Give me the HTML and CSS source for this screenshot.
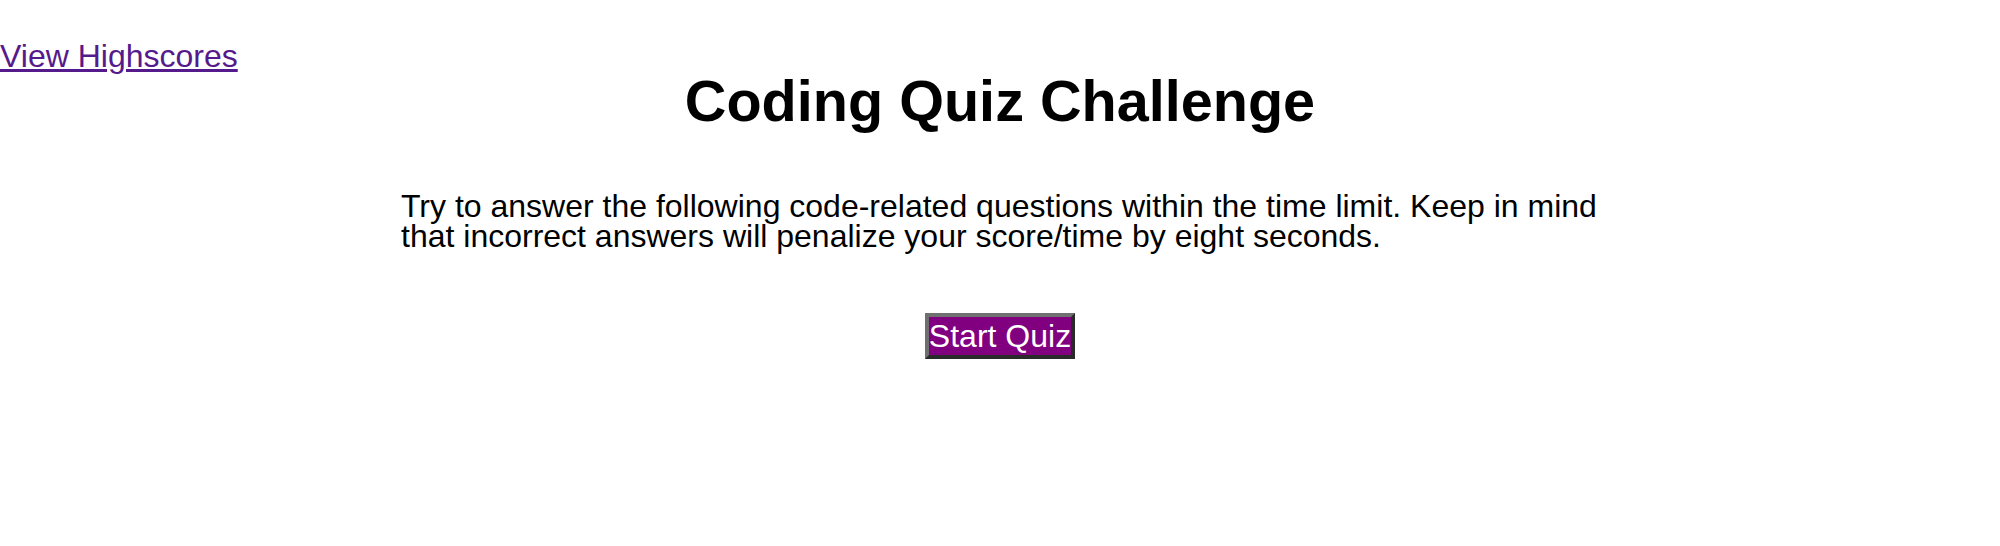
FILE: index.html
```html
<!DOCTYPE html>
<html lang="en">
<head>
<meta charset="utf-8">
<title>Coding Quiz Challenge</title>
<link rel="stylesheet" href="styles.css">
</head>
<body>
<header class="header">
  <a class="scores-link" href="#">View Highscores</a>
  <h1 class="title">Coding Quiz Challenge</h1>
  <div class="spacer"></div>
</header>
<main class="intro">
  <p class="intro-text">Try to answer the following code-related questions within the time limit. Keep in mind that incorrect answers will penalize your score/time by eight seconds.</p>
  <div class="actions">
    <button class="start-btn" type="button">Start Quiz</button>
  </div>
</main>
</body>
</html>
```
FILE: styles.css
```css
html, body {
  margin: 0;
  padding: 0;
  background: #ffffff;
}
body {
  font-family: "Liberation Sans", Arial, sans-serif;
  color: #000000;
}
.header {
  display: grid;
  grid-template-columns: 1fr auto 1fr;
  align-items: start;
}
.scores-link {
  justify-self: start;
  margin-top: 38px;
  font-size: 32px;
  color: #551a8b;
  text-decoration: underline;
  white-space: nowrap;
}
.title {
  margin: 68px 0 0;
  font-size: 57.6px;
  font-weight: bold;
  text-align: center;
}
.intro {
  display: flex;
  flex-direction: column;
  align-items: center;
}
.intro-text {
  width: 1198px;
  margin: 57px 0 0;
  font-size: 32px;
  line-height: 30px;
}
.actions {
  margin-top: 62px;
  display: flex;
  justify-content: center;
}
.start-btn {
  font-family: "Liberation Sans", Arial, sans-serif;
  font-size: 32px;
  line-height: 38px;
  color: #ffffff;
  background: #800080;
  padding: 0;
  border-width: 4px;
  border-style: solid;
  border-color: #707070 #2a2a2a #2a2a2a #707070;
  cursor: pointer;
}
```
